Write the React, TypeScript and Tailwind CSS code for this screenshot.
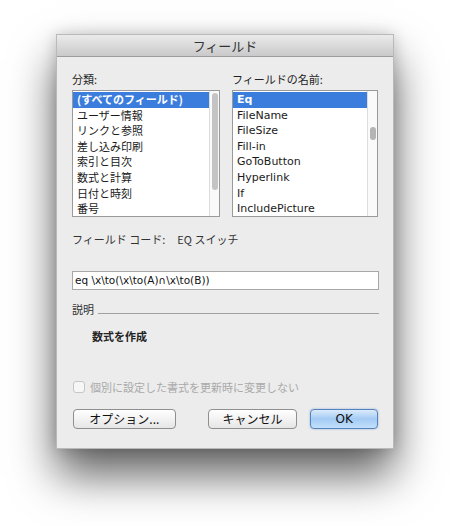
import React from 'react';

const JP = "font-['Noto_Sans_CJK_JP','DejaVu_Sans',sans-serif]";
const LAT = "font-['DejaVu_Sans','Noto_Sans_CJK_JP',sans-serif]";

const CATEGORIES = [
  '(すべてのフィールド)',
  'ユーザー情報',
  'リンクと参照',
  '差し込み印刷',
  '索引と目次',
  '数式と計算',
  '日付と時刻',
  '番号',
];

const FIELDS = ['Eq', 'FileName', 'FileSize', 'Fill-in', 'GoToButton', 'Hyperlink', 'If', 'IncludePicture'];

type ListProps = {
  items: string[];
  width: string;
  thumb: 'top' | 'mid';
  latin?: boolean;
};

const ListBox: React.FC<ListProps> = ({ items, width, thumb, latin }) => (
  <div className={`${width} h-[127px] bg-white border border-[#9a9a9a] flex overflow-hidden`}>
    <div className="flex-1 flex flex-col pt-px">
      {items.map((it, i) => (
        <div
          key={it}
          className={`h-[15.6px] leading-[15.6px] pl-[4px] text-[11px] whitespace-nowrap ${latin ? LAT : JP} ${
            i === 0 ? 'bg-[#3b7ddd] text-white font-bold' : 'text-[#1a1a1a]'
          }`}
        >
          {it}
        </div>
      ))}
    </div>
    <div className="w-[10px] border-l border-[#dcdcdc] bg-[#fafafa] flex flex-col items-center">
      {thumb === 'top' ? (
        <div className="mt-[2px] w-[6px] h-[97px] rounded-full bg-[#c4c4c4]" />
      ) : (
        <div className="mt-[36px] w-[6px] h-[13px] rounded-full bg-[#b4b4b4]" />
      )}
    </div>
  </div>
);

const App: React.FC = () => {
  return (
    <div className="w-[450px] h-[526px] bg-white pt-[34px] pl-[56px] overflow-hidden">
      <div className="w-[338px] h-[415px] bg-[#ececec] border border-[#b9b9b9] shadow-[0_26px_42px_rgba(0,0,0,0.62),0_0_14px_rgba(0,0,0,0.18)] flex flex-col">
        {/* Title bar */}
        <div className="h-[22px] bg-gradient-to-b from-[#ebebeb] to-[#c9c9c9] border-b border-[#9c9c9c] flex items-center justify-center">
          <span className={`${JP} text-[13px] text-[#333] leading-none`}>フィールド</span>
        </div>

        <div className="px-[15px] pt-[14px] flex flex-col">
          {/* Lists */}
          <div className="flex gap-[12px]">
            <div className="flex flex-col gap-[3px]">
              <span className={`${JP} text-[11px] leading-[16px] text-[#222]`}>分類:</span>
              <ListBox items={CATEGORIES} width="w-[148px]" thumb="top" />
            </div>
            <div className="flex flex-col gap-[3px]">
              <span className={`${JP} text-[11px] leading-[16px] text-[#222]`}>フィールドの名前:</span>
              <ListBox items={FIELDS} width="w-[146px]" thumb="mid" latin />
            </div>
          </div>

          {/* Field code */}
          <div className={`${JP} mt-[14px] text-[11px] leading-[16px] text-[#333] flex`}>
            <span>フィールド コード:</span>
            <span className="ml-[12px]">EQ スイッチ</span>
          </div>

          <div className="mt-[24px] h-[19px] w-[307px] bg-white border border-[#a8a8a8] flex items-center pl-[2px]">
            <span className={`${LAT} text-[10.5px] text-[#111] whitespace-nowrap`}>
              eq \x\to(\x\to(A)∩\x\to(B))
            </span>
          </div>

          {/* Description */}
          <div className="mt-[11px] h-[16px] flex items-center gap-[4px] w-[307px]">
            <span className={`${JP} text-[11px] text-[#333]`}>説明</span>
            <div className="flex-1 h-px bg-[#a0a0a0] mt-[8px]" />
          </div>
          <div className={`${JP} mt-[11px] pl-[20px] text-[11px] leading-[16px] font-bold text-[#222]`}>数式を作成</div>

          {/* Checkbox */}
          <div className="mt-[35px] h-[16px] flex items-center gap-[5px] pl-[1px]">
            <div className="w-[12px] h-[12px] rounded-[3px] border border-[#c6c6c6] bg-[#f6f6f6]" />
            <span className={`${JP} text-[11px] text-[#a9a9a9]`}>個別に設定した書式を更新時に変更しない</span>
          </div>

          {/* Buttons */}
          <div className="mt-[14px] flex items-center pl-px">
            <button className={`${JP} w-[103px] h-[20px] rounded-[4px] border border-[#8f8f8f] bg-gradient-to-b from-white to-[#e6e6e6] text-[12px] text-[#111] leading-none`}>
              オプション...
            </button>
            <button className={`${JP} ml-[32px] w-[90px] h-[20px] rounded-[4px] border border-[#8f8f8f] bg-gradient-to-b from-white to-[#e6e6e6] text-[12px] text-[#111] leading-none`}>
              キャンセル
            </button>
            <button className={`${LAT} ml-[13px] w-[68px] h-[20px] rounded-[4px] border border-[#5682bd] bg-gradient-to-b from-[#dbeafb] via-[#a3cbf4] to-[#c2e0fb] text-[12px] text-[#111] leading-none shadow-[0_0_2px_rgba(60,120,200,0.6)]`}>
              OK
            </button>
          </div>
        </div>
      </div>
    </div>
  );
};

export default App;
